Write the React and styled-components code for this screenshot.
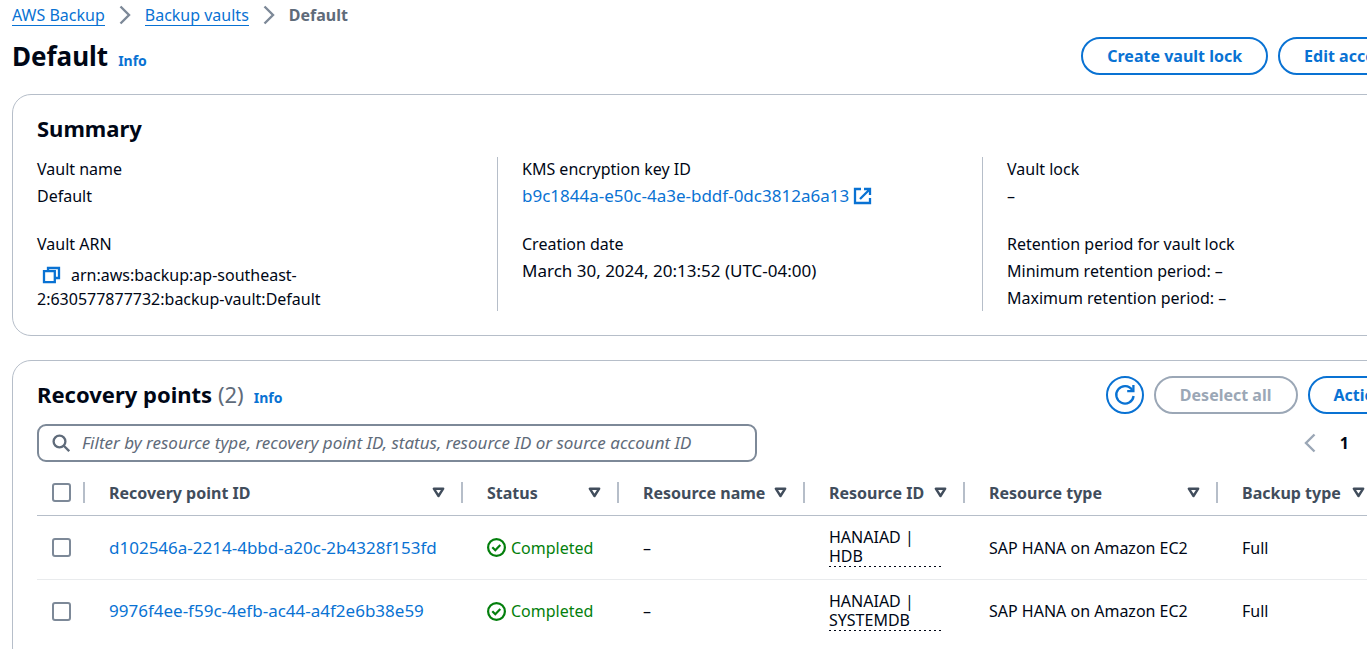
import { useState } from "react"
import styled, { createGlobalStyle, css } from "styled-components"
import { Settings } from "lucide-react"

const GlobalStyle = createGlobalStyle`
  :root {
    --blue: #0972d3;
    --text: #000716;
    --text-heading: #414d5c;
    --text-secondary: #5f6b7a;
    --gray: #7d8998;
    --gray-disabled: #9ba7b6;
    --divider: #b6bec9;
    --row-divider: #e9ebed;
    --green: #037f0c;
    --fz-small: 14px;
    --fz-body: 16px;
    --fz-value: 17px;
    --fz-h2: 22px;
    --fz-h1: 26px;
  }
  * {
    box-sizing: border-box;
  }
  body {
    margin: 0;
    overflow: hidden;
    background: #fff;
    color: var(--text);
    font-family: "Noto Sans", "Open Sans", sans-serif;
    font-size: var(--fz-body);
    line-height: 24px;
  }
  h1, h2, dl, dd, ol {
    margin: 0;
    padding: 0;
  }
  button, input {
    font: inherit;
  }
  a {
    color: var(--blue);
    text-decoration: none;
  }
`

// the console page is a bit wider than the window, the rest runs off to the right
const Page = styled.main`
  width: calc(100% + 101px);
  padding: 3px 0 0 12px;
`

const Breadcrumbs = styled.ol`
  display: flex;
  align-items: center;
  gap: 14px;
  height: 24px;
  list-style: none;
  color: var(--text-secondary);
  li {
    display: flex;
    align-items: center;
    gap: 14px;
    line-height: 20px;
  }
  a {
    border-bottom: 1px solid var(--blue);
  }
  svg {
    color: var(--gray);
  }
`

const HeaderRow = styled.header`
  display: flex;
  align-items: center;
  justify-content: space-between;
  min-height: 38px;
`

const PageHeader = styled(HeaderRow)`
  margin: 10px 0 19px;
`

const Titles = styled.div`
  display: flex;
  align-items: baseline;
  gap: 10px;
`

const PageTitle = styled.h1`
  font-size: var(--fz-h1);
  line-height: 36px;
`

const PanelTitle = styled.h2`
  font-size: var(--fz-h2);
  line-height: 28px;
  span {
    color: var(--text-secondary);
    font-weight: 400;
  }
`

const InfoLink = styled.a`
  font-size: var(--fz-small);
  font-weight: 700;
`

const Actions = styled.div`
  display: flex;
  gap: 10px;
`

const Button = styled.button`
  display: flex;
  align-items: center;
  justify-content: center;
  gap: 8px;
  height: 38px;
  padding: 0 24px;
  border: 2px solid currentColor;
  border-radius: 19px;
  background: #fff;
  color: var(--blue);
  font-weight: 700;
  white-space: nowrap;
  cursor: pointer;
  &:disabled {
    color: var(--gray-disabled);
    cursor: default;
  }
  ${({ $round }) => $round && css`
    width: 38px;
    padding: 0;
  `}
`

const Panel = styled.section`
  border: 1px solid var(--divider);
  border-radius: 19px;
  background: #fff;
`

const SummaryPanel = styled(Panel)`
  margin-bottom: 24px;
  padding: 19px 24px 24px;
`

const SummaryColumns = styled.div`
  display: flex;
  margin-top: 15px;
`

const SummaryColumn = styled.dl`
  display: flex;
  flex: 1 1 0;
  flex-direction: column;
  gap: 24px;
  min-width: 0;
  padding: 0 24px;
  border-left: 1px solid var(--divider);
  &:first-child {
    padding-left: 0;
    border-left: 0;
  }
  &:last-child {
    padding-right: 0;
  }
`

const Field = styled.div`
  dd {
    margin-top: 3px;
  }
  a {
    display: inline-flex;
    align-items: center;
    gap: 4px;
  }
`

const LargeValue = styled.dd`
  font-size: var(--fz-value);
`

const Arn = styled.dd`
  max-width: 300px;
`

const CopyButton = styled.button`
  display: inline-flex;
  align-items: center;
  height: 28px;
  margin-right: 5px;
  padding: 4px 5px 0;
  border: 0;
  background: none;
  color: var(--blue);
  vertical-align: bottom;
  cursor: pointer;
`

const RecoveryPanel = styled(Panel)`
  padding: 15px 24px 24px;
`

const Toolbar = styled.div`
  display: flex;
  align-items: center;
  justify-content: space-between;
  margin-top: 10px;
`

const SearchBox = styled.label`
  display: flex;
  align-items: center;
  gap: 12px;
  width: 720px;
  height: 38px;
  padding: 0 13px;
  border: 2px solid var(--gray);
  border-radius: 9px;
  color: var(--text-secondary);
  input {
    flex: 1;
    min-width: 0;
    padding: 0;
    border: 0;
    outline: 0;
    background: none;
    font-size: var(--fz-value);
  }
  input::placeholder {
    color: var(--text-secondary);
    font-style: italic;
    opacity: 1;
  }
`

const Pager = styled.nav`
  display: flex;
  align-items: center;
  gap: 24px;
  button {
    display: flex;
    padding: 0;
    border: 0;
    background: none;
    color: var(--gray-disabled);
  }
  button:last-child {
    margin-left: 16px;
    color: var(--text-secondary);
  }
`

const Table = styled.table`
  margin-top: 8px;
  border-spacing: 0;
`

const Col = styled.col`
  width: ${({ $width }) => $width};
`

const Th = styled.th`
  height: 46px;
  padding: 0;
  border-bottom: 1px solid var(--divider);
  color: var(--text-heading);
  text-align: left;
  white-space: nowrap;
`

const HeadCell = styled.div`
  display: flex;
  align-items: center;
  justify-content: space-between;
  height: 21px;
  padding: 0 16px 0 24px;
  border-right: 2px solid var(--divider);
`

const CheckHeadCell = styled(HeadCell)`
  padding: 0 0 0 15px;
`

const Td = styled.td`
  height: 64px;
  padding: 0 24px;
  border-bottom: 1px solid var(--row-divider);
  white-space: nowrap;
  tr:last-child & {
    height: 62px;
    border-bottom: 0;
  }
`

const CheckTd = styled(Td)`
  padding: 0 0 0 15px;
`

const PointLink = styled.a`
  font-size: var(--fz-value);
`

const Checkbox = styled.input.attrs({ type: "checkbox" })`
  display: block;
  width: 19px;
  height: 19px;
  margin: 0;
  appearance: none;
  border: 2px solid var(--gray);
  border-radius: 3px;
  &:checked {
    border-color: var(--blue);
    background: var(--blue);
  }
`

const Status = styled.span`
  display: flex;
  align-items: center;
  gap: 5px;
  color: var(--green);
`

const ResourceId = styled.div`
  padding-bottom: 1px;
  background: repeating-linear-gradient(to right, var(--text) 0 2px, transparent 2px 5px) bottom / 100% 1px no-repeat;
  line-height: 19px;
  white-space: normal;
`

const ChevronIcon = ({ left }) => (
  <svg width="12" height="20" viewBox="0 0 12 20" fill="none" stroke="currentColor" strokeWidth="2.4" aria-hidden="true">
    <path d={left ? "M10.5 1.5 2 10l8.5 8.5" : "M1.5 1.5 10 10l-8.5 8.5"} />
  </svg>
)

const SortIcon = () => (
  <svg width="13" height="11" viewBox="0 0 13 11" fill="none" stroke="currentColor" strokeWidth="2.4" strokeLinejoin="round" aria-hidden="true">
    <path d="M1.8 1.7h9.4L6.5 9z" />
  </svg>
)

const CopyIcon = () => (
  <svg width="19" height="18" viewBox="0 0 19 18" fill="none" stroke="currentColor" strokeWidth="2.3" aria-hidden="true">
    <path d="M2 5.2h10.8v11H2z" />
    <path d="M6 5V2h11v10h-4" />
  </svg>
)

const ExternalIcon = () => (
  <svg width="19" height="18" viewBox="0 0 19 18" fill="none" stroke="currentColor" strokeWidth="2.3" aria-hidden="true">
    <path d="M8 2H2v14h15v-5M11 2h6v6M17 2 7 12" />
  </svg>
)

const SearchIcon = () => (
  <svg width="18" height="18" viewBox="0 0 18 18" fill="none" stroke="currentColor" strokeWidth="2.3" aria-hidden="true">
    <circle cx="7.5" cy="7.5" r="5.9" />
    <path d="m11.8 11.8 5.4 5.4" />
  </svg>
)

const RefreshIcon = () => (
  <svg width="22" height="22" viewBox="0 0 22 22" fill="none" stroke="currentColor" strokeWidth="2.3" aria-hidden="true">
    <path d="M19.6 12a8.7 8.7 0 1 1-1.4-6" />
    <path d="M19.4 1v6.1h-6.2" />
  </svg>
)

const CheckIcon = () => (
  <svg width="19" height="19" viewBox="0 0 19 19" fill="none" stroke="currentColor" strokeWidth="2.2" aria-hidden="true">
    <circle cx="9.5" cy="9.5" r="8.4" />
    <path d="m5.3 9.3 3 3 5-5.2" />
  </svg>
)

const CaretIcon = () => (
  <svg width="16" height="16" viewBox="0 0 16 16" fill="currentColor" aria-hidden="true">
    <path d="M3 5h10l-5 6z" />
  </svg>
)

const columns = [
  { label: "Recovery point ID", width: "378px" },
  { label: "Status", width: "156px" },
  { label: "Resource name", width: "186px" },
  { label: "Resource ID", width: "160px" },
  { label: "Resource type", width: "253px" },
  { label: "Backup type", width: "165px" },
]

const recoveryPoints = [
  { id: "d102546a-2214-4bbd-a20c-2b4328f153fd", resource: "HANAIAD | HDB" },
  { id: "9976f4ee-f59c-4efb-ac44-a4f2e6b38e59", resource: "HANAIAD | SYSTEMDB" },
]

const Summary = () => {
  return (
    <SummaryPanel>
      <PanelTitle>Summary</PanelTitle>
      <SummaryColumns>
        <SummaryColumn>
          <Field>
            <dt>Vault name</dt>
            <dd>Default</dd>
          </Field>
          <Field>
            <dt>Vault ARN</dt>
            <Arn>
              <CopyButton aria-label="Copy ARN"><CopyIcon /></CopyButton>
              arn:aws:backup:ap-southeast-2:630577877732:backup-vault:Default
            </Arn>
          </Field>
        </SummaryColumn>
        <SummaryColumn>
          <Field>
            <dt>KMS encryption key ID</dt>
            <LargeValue><a href="#kms">b9c1844a-e50c-4a3e-bddf-0dc3812a6a13 <ExternalIcon /></a></LargeValue>
          </Field>
          <Field>
            <dt>Creation date</dt>
            <LargeValue>March 30, 2024, 20:13:52 (UTC-04:00)</LargeValue>
          </Field>
        </SummaryColumn>
        <SummaryColumn>
          <Field>
            <dt>Vault lock</dt>
            <dd>–</dd>
          </Field>
          <Field>
            <dt>Retention period for vault lock</dt>
            <dd>Minimum retention period: –</dd>
            <dd>Maximum retention period: –</dd>
          </Field>
        </SummaryColumn>
      </SummaryColumns>
    </SummaryPanel>
  )
}

const RecoveryPoints = () => {
  const [selected, setSelected] = useState([])
  const allSelected = selected.length === recoveryPoints.length

  const toggle = (id) => {
    setSelected(selected.includes(id) ? selected.filter((item) => item !== id) : [...selected, id])
  }

  return (
    <RecoveryPanel>
      <HeaderRow>
        <Titles>
          <PanelTitle>Recovery points <span>(2)</span></PanelTitle>
          <InfoLink href="#recovery-info">Info</InfoLink>
        </Titles>
        <Actions>
          <Button $round aria-label="Refresh"><RefreshIcon /></Button>
          <Button disabled={selected.length === 0} onClick={() => setSelected([])}>Deselect all</Button>
          <Button>Actions <CaretIcon /></Button>
        </Actions>
      </HeaderRow>
      <Toolbar>
        <SearchBox>
          <SearchIcon />
          <input
            type="text"
            aria-label="Filter recovery points"
            placeholder="Filter by resource type, recovery point ID, status, resource ID or source account ID"
          />
        </SearchBox>
        <Pager aria-label="Pagination">
          <button disabled aria-label="Previous page"><ChevronIcon left /></button>
          <b>1</b>
          <button disabled aria-label="Next page"><ChevronIcon /></button>
          <button aria-label="Preferences"><Settings size={18} /></button>
        </Pager>
      </Toolbar>
      <Table>
        <colgroup>
          <Col $width="48px" />
          {columns.map((column) => <Col key={column.label} $width={column.width} />)}
        </colgroup>
        <thead>
          <tr>
            <Th>
              <CheckHeadCell>
                <Checkbox
                  aria-label="Select all"
                  checked={allSelected}
                  onChange={() => setSelected(allSelected ? [] : recoveryPoints.map((point) => point.id))}
                />
              </CheckHeadCell>
            </Th>
            {columns.map((column) => (
              <Th key={column.label} scope="col">
                <HeadCell>{column.label} <SortIcon /></HeadCell>
              </Th>
            ))}
          </tr>
        </thead>
        <tbody>
          {recoveryPoints.map((point) => (
            <tr key={point.id}>
              <CheckTd>
                <Checkbox
                  aria-label={`Select ${point.id}`}
                  checked={selected.includes(point.id)}
                  onChange={() => toggle(point.id)}
                />
              </CheckTd>
              <Td><PointLink href={`#${point.id}`}>{point.id}</PointLink></Td>
              <Td><Status><CheckIcon />Completed</Status></Td>
              <Td>–</Td>
              <Td><ResourceId>{point.resource}</ResourceId></Td>
              <Td>SAP HANA on Amazon EC2</Td>
              <Td>Full</Td>
            </tr>
          ))}
        </tbody>
      </Table>
    </RecoveryPanel>
  )
}

const App = () => {
  return (
    <>
      <GlobalStyle />
      <Page>
        <nav aria-label="Breadcrumbs">
          <Breadcrumbs>
            <li><a href="#backup">AWS Backup</a><ChevronIcon /></li>
            <li><a href="#vaults">Backup vaults</a><ChevronIcon /></li>
            <li><b>Default</b></li>
          </Breadcrumbs>
        </nav>
        <PageHeader>
          <Titles>
            <PageTitle>Default</PageTitle>
            <InfoLink href="#info">Info</InfoLink>
          </Titles>
          <Actions>
            <Button>Create vault lock</Button>
            <Button>Edit access policy</Button>
          </Actions>
        </PageHeader>
        <Summary />
        <RecoveryPoints />
      </Page>
    </>
  )
}

export default App
